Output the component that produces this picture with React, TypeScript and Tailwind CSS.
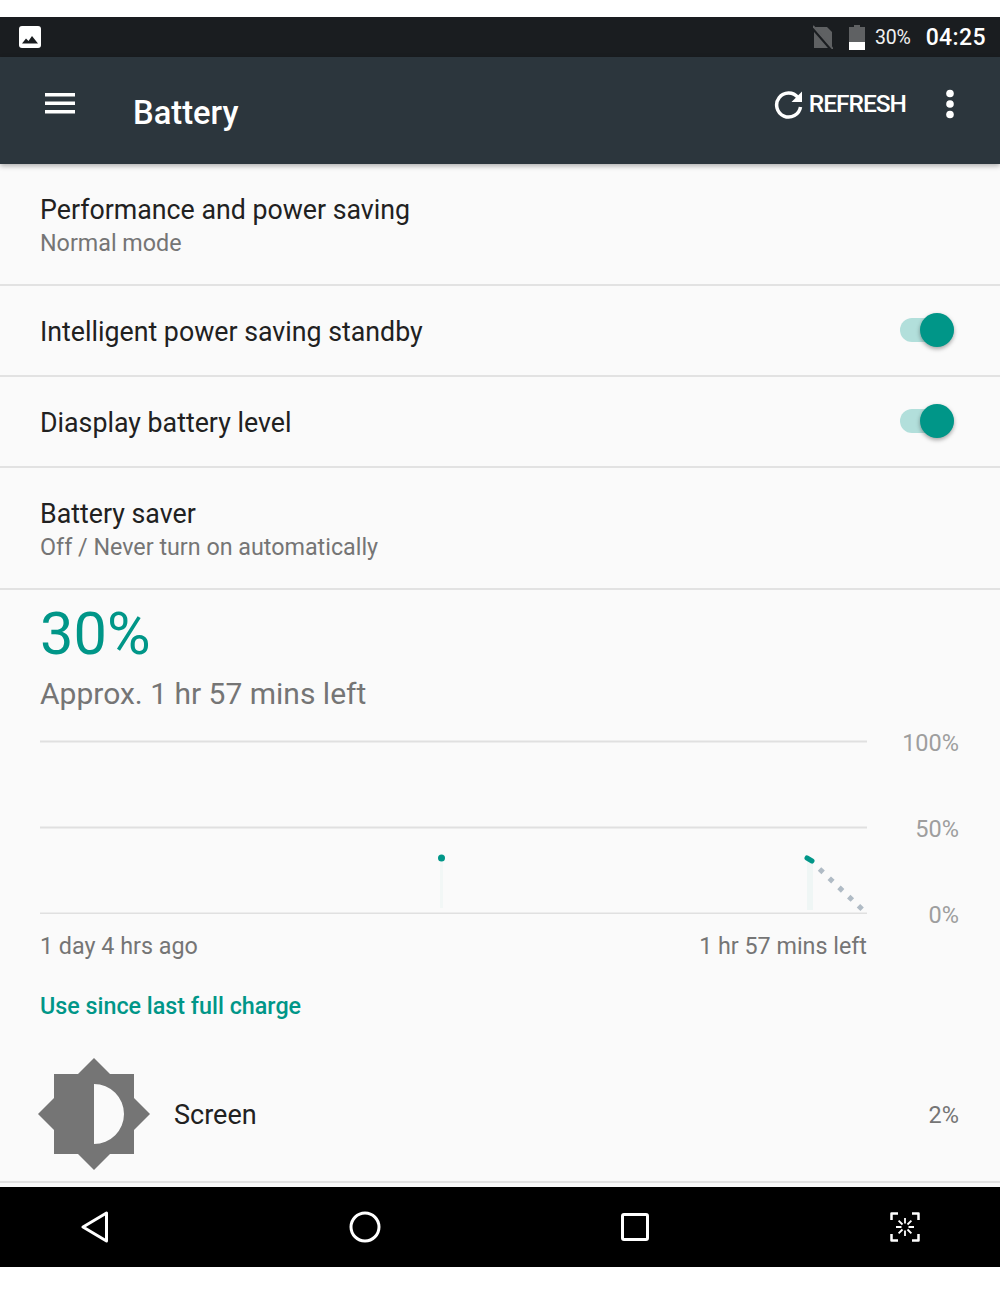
function Toggle() {
  return (
    <div className="relative mb-[2px] h-[24px] w-[54px] rounded-full bg-[#b2dfdb]">
      <div className="absolute right-0 top-[-5px] h-[34px] w-[34px] rounded-full bg-[#009688] shadow-[0_2px_4px_rgba(0,0,0,0.35)]" />
    </div>
  );
}

function StatusBar() {
  return (
    <div className="flex h-[40px] items-center justify-between bg-[#1a1d20] pl-[19px] pr-[14px]">
      <svg width="22" height="22" viewBox="0 0 22 22">
        <rect width="22" height="22" rx="3" fill="#fff" />
        <path d="M3 17.5 L7 12.5 L9.5 15 L13 10 L19 17.5 Z" fill="#1a1d20" />
      </svg>
      <div className="flex items-center">
        <svg width="20" height="24" viewBox="0 0 20 24" className="mr-[16px]">
          <path d="M1 2 H14 L19 7 V23 H1 Z" fill="#5f6163" />
          <path d="M0 3 L19 25" stroke="#1a1d20" strokeWidth="3.500" />
          <path d="M0 1 L20 24" stroke="#5f6163" strokeWidth="2" />
        </svg>
        <svg width="16" height="25" viewBox="0 0 16 25" className="mr-[10px]">
          <path d="M5 0 H11 V2 H16 V25 H0 V2 H5 Z" fill="#5f6163" />
          <rect y="17" width="16" height="8" fill="#fff" />
        </svg>
        <span className="mr-[15px] pt-[2px] text-[19.5px] tracking-[-0.2px] text-[#f0f0f0]">30%</span>
        <span className="pt-[3px] text-[23px] font-medium tracking-[0.4px] text-white">04:25</span>
      </div>
    </div>
  );
}

function AppBar() {
  return (
    <div className="relative z-10 flex h-[107px] items-start bg-[#2c363d] shadow-[0_2px_5px_rgba(0,0,0,0.3)]">
      <svg width="30" height="22" viewBox="0 0 30 22" fill="#fff" className="ml-[45px] mt-[36px]">
        <rect y="0" width="30" height="3.500" />
        <rect y="8.500" width="30" height="3.500" />
        <rect y="17" width="30" height="3.500" />
      </svg>
      <span className="ml-[58px] mt-[33px] text-[32.700px] font-medium leading-[46px] text-white">Battery</span>
      <div className="ml-auto mt-[29px] flex items-center pr-[45px]">
        <svg width="30" height="30" viewBox="0 0 30 30" className="mr-[5px]" fill="none">
          <path d="M24 8.500 A12 12 0 1 0 26.500 18" stroke="#fff" strokeWidth="3.500" />
          <path d="M28 2.500 V13 H17.500 Z" fill="#fff" />
        </svg>
        <span className="mr-[39px] text-[24.5px] font-medium leading-[36px] tracking-[-1px] text-white">REFRESH</span>
        <svg width="10" height="30" viewBox="0 0 10 30" fill="#fff" className="mb-[1px]">
          <circle cx="5" cy="4.500" r="3.800" />
          <circle cx="5" cy="15" r="3.800" />
          <circle cx="5" cy="25.500" r="3.800" />
        </svg>
      </div>
    </div>
  );
}

function TwoLineRow({ title, sub }: { title: string; sub: string }) {
  return (
    <div className="h-[122px] border-b-2 border-[#e2e2e2] pl-[40px] pt-[28px]">
      <p className="text-[26.75px] leading-[36px] text-[#212121]">{title}</p>
      <p className="text-[23.3px] leading-[30px] text-[#757575]">{sub}</p>
    </div>
  );
}

function SwitchRow({ title }: { title: string }) {
  return (
    <div className="flex h-[91px] items-center justify-between border-b-2 border-[#e2e2e2] pl-[40px] pr-[46px]">
      <p className="pt-[4px] text-[26.75px] text-[#212121]">{title}</p>
      <Toggle />
    </div>
  );
}

function Chart() {
  return (
    <div className="flex pl-[40px] pr-[41px]">
      <div className="w-[827px]">
        <svg width="827" height="174" viewBox="0 0 827 174" className="block">
          <path d="M0 1.500 H827 M0 87.500 H827 M0 173.500 H827" stroke="#e0e0e0" strokeWidth="2" />
          <rect x="400" y="118" width="3" height="50" fill="#f2f7f6" />
          <circle cx="401.500" cy="118" r="3.500" fill="#009688" />
          <rect x="767" y="120" width="6" height="50" fill="#eff6f5" />
          <path d="M767 118 L772 121" stroke="#009688" strokeWidth="5" strokeLinecap="round" />
          <path d="M779.500 129 L824 171" stroke="#b0bbc5" strokeWidth="5" strokeDasharray="5 8.400" />
        </svg>
        <div className="mt-[18px] flex justify-between text-[23.3px] leading-[28px] text-[#757575]">
          <span>1 day 4 hrs ago</span>
          <span>1 hr 57 mins left</span>
        </div>
      </div>
      <div className="flex flex-1 flex-col items-end text-[23.500px] leading-[28px] text-[#9e9e9e]">
        <span className="mt-[-11px]">100%</span>
        <span className="mt-[58px]">50%</span>
        <span className="mt-[58px]">0%</span>
      </div>
    </div>
  );
}

function UsageRow() {
  return (
    <div className="mt-[36px] flex h-[112px] items-center justify-between pr-[41px]">
      <div className="flex items-center">
        <svg width="112" height="112" viewBox="0 0 112 112" className="ml-[38px]">
          <path
            fillRule="evenodd"
            fill="#757575"
            d="M56 0 L72 16 H96 V40 L112 56 L96 72 V96 H72 L56 112 L40 96 H16 V72 L0 56 L16 40 V16 H40 Z M56 26 V86 A30 30 0 0 0 56 26 Z"
          />
        </svg>
        <span className="ml-[24px] pt-[2px] text-[27px] text-[#212121]">Screen</span>
      </div>
      <span className="pt-[4px] text-[23.500px] text-[#757575]">2%</span>
    </div>
  );
}

function NavBar() {
  return (
    <div className="flex h-[80px] items-center justify-between bg-black px-[79px]">
      <div className="flex w-[32px] justify-center">
        <svg width="28" height="32" viewBox="0 0 28 32" fill="none">
          <path d="M25.500 2 V30 L2 16 Z" stroke="#fff" strokeWidth="3" strokeLinejoin="round" />
        </svg>
      </div>
      <div className="flex w-[32px] justify-center">
        <svg width="32" height="32" viewBox="0 0 32 32" fill="none">
          <circle cx="16" cy="16" r="14" stroke="#fff" strokeWidth="3" />
        </svg>
      </div>
      <div className="flex w-[32px] justify-center">
        <svg width="28" height="28" viewBox="0 0 28 28" fill="none">
          <rect x="1.500" y="1.500" width="25" height="25" rx="1.500" stroke="#fff" strokeWidth="3" />
        </svg>
      </div>
      <div className="flex w-[32px] justify-center">
        <svg width="30" height="30" viewBox="0 0 30 30" fill="none" stroke="#fff">
          <path
            d="M1.500 8 V1.500 H8 M22 1.500 H28.500 V8 M28.500 22 V28.500 H22 M8 28.500 H1.500 V22"
            strokeWidth="2.500"
            strokeLinejoin="round"
          />
          <path
            d="M15 6 V11.500 M15 18.500 V24 M6 15 H11.500 M18.500 15 H24 M8.600 8.600 L12.500 12.500 M17.500 17.500 L21.400 21.400 M21.400 8.600 L17.500 12.500 M12.500 17.500 L8.600 21.400"
            strokeWidth="1.800"
          />
        </svg>
      </div>
    </div>
  );
}

export default function App() {
  return (
    <div className="h-[1297px] bg-white pt-[17px] font-['Roboto',sans-serif]">
      <StatusBar />
      <AppBar />
      <div className="h-[1023px] bg-[#fafafa]">
        <TwoLineRow title="Performance and power saving" sub="Normal mode" />
        <SwitchRow title="Intelligent power saving standby" />
        <SwitchRow title="Diasplay battery level" />
        <TwoLineRow title="Battery saver" sub="Off / Never turn on automatically" />
        <div className="pl-[40px] pt-[12px]">
          <p className="text-[59.500px] leading-[64px] text-[#009688]">30%</p>
          <p className="mt-[8px] text-[30px] leading-[40px] text-[#757575]">Approx. 1 hr 57 mins left</p>
        </div>
        <div className="mt-[26px]">
          <Chart />
        </div>
        <p className="mt-[30px] pl-[40px] text-[23.300px] font-medium leading-[32px] text-[#009688]">Use since last full charge</p>
        <UsageRow />
        <div className="mt-[11px] h-[2px] bg-[#e2e2e2]" />
      </div>
      <NavBar />
    </div>
  );
}
